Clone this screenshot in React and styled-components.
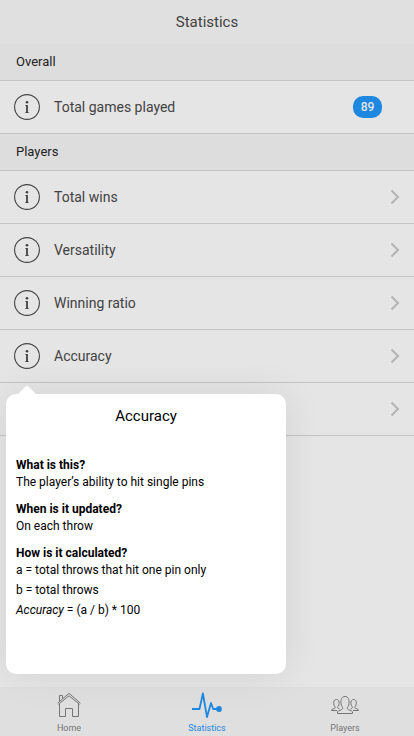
import React from "react";
import styled, { createGlobalStyle, css } from "styled-components";

const GlobalStyle = createGlobalStyle`
  *, *::before, *::after { box-sizing: border-box; }
  body {
    margin: 0;
    background: #e5e5e5;
    color: #424242;
    font-family: Roboto, "Liberation Sans", sans-serif;
  }
  h1, h2, h3, p, ul { margin: 0; padding: 0; }
`;

const Page = styled.div`
  display: flex;
  flex-direction: column;
  min-height: 100vh;
`;

const Header = styled.header`
  display: flex;
  align-items: center;
  justify-content: center;
  height: 44px;
  background: #e0e0e0;
`;

const Title = styled.h1`
  font-size: 15px;
  font-weight: 400;
  line-height: 20px;
`;

const Main = styled.main`
  flex: 1;
`;

const SectionTitle = styled.h2`
  padding: 8px 16px;
  border-bottom: 1px solid #c4c4c4;
  background: #dddddd;
  color: #222;
  font-size: 13px;
  font-weight: 400;
  line-height: 20px;
`;

const List = styled.ul`
  list-style: none;
`;

const Row = styled.li`
  position: relative;
  display: flex;
  align-items: center;
  height: 53px;
  padding-left: 14px;
  border-bottom: 1px solid #c4c4c4;
`;

const plainButton = css`
  border: 0;
  padding: 0;
  background: none;
  color: inherit;
  font: inherit;
  cursor: pointer;
`;

const InfoButton = styled.button`
  ${plainButton}
  display: flex;
  width: 26px;
  height: 26px;
`;

const RowLink = styled.a`
  display: flex;
  flex: 1;
  align-items: center;
  justify-content: space-between;
  padding: 0 14px;
  color: inherit;
  font-size: 14px;
  line-height: 20px;
  text-decoration: none;
`;

const RowText = styled.div`
  display: flex;
  flex: 1;
  align-items: center;
  justify-content: space-between;
  padding: 0 32px 0 14px;
  font-size: 14px;
  line-height: 20px;
`;

const Badge = styled.span`
  min-width: 29px;
  padding: 1px 7px;
  border-radius: 10px;
  background: #1e88e0;
  color: #e5e5e5;
  font-size: 12px;
  font-weight: 500;
  text-align: center;
`;

const Popover = styled.section`
  position: absolute;
  z-index: 1;
  top: 64px;
  left: 6px;
  width: 280px;
  min-height: 280px;
  border-radius: 10px;
  background: #fff;
  color: #000;
  box-shadow: 0 0 40px rgba(0, 0, 0, 0.08);
`;

const Arrow = styled.svg`
  position: absolute;
  top: -9px;
  left: 11px;
  width: 20px;
  height: 10px;
`;

const PopoverTitle = styled.h2`
  font-size: 15px;
  font-weight: 400;
  line-height: 44px;
  text-align: center;
`;

const PopoverBody = styled.div`
  display: flex;
  flex-direction: column;
  gap: 10px;
  padding: 20px 10px;
  font-size: 12px;
  line-height: 20px;
`;

const Question = styled.h3`
  font-size: 12px;
  font-weight: 700;
  line-height: 14px;
`;

const TabBar = styled.nav`
  display: flex;
  height: 49px;
  background: #dfdfdf;
`;

const Tab = styled.a`
  display: flex;
  flex: 1;
  flex-direction: column;
  align-items: center;
  padding-top: 4px;
  color: ${({ $active }) => ($active ? "#1e88e0" : "#757575")};
  font-size: 9px;
  line-height: 14px;
  text-decoration: none;

  svg {
    margin-bottom: 1px;
  }
`;

const InfoIcon = () => (
  <svg width="26" height="26" viewBox="0 0 26 26" aria-hidden="true">
    <circle cx="13" cy="13" r="12.4" fill="none" stroke="currentColor" strokeWidth="1.1" />
    <circle cx="13" cy="8.2" r="1.3" fill="currentColor" />
    <path d="M11.2 11h2.7v7.2l1.1.3v.6h-4v-.6l1.1-.3v-6.3l-.9-.3z" fill="currentColor" />
  </svg>
);

const Chevron = () => (
  <svg width="10" height="16" viewBox="0 0 10 16" aria-hidden="true">
    <path d="M1.500 1.500L8 8l-6.500 6.500" fill="none" stroke="#b3b3b3" strokeWidth="2" />
  </svg>
);

const HomeIcon = () => (
  <svg width="28" height="29" viewBox="0 0 28 29" fill="none" stroke="currentColor" aria-hidden="true">
    <path d="M2.600 12.200L14 2.300l11.400 9.900M3.400 13.300L14 4.800l10.600 8.500" strokeWidth="1" />
    <path d="M4.500 12.500v13h6v-8h7v8h6v-13M4.500 10V4.500h3v3.200" strokeWidth="1" />
  </svg>
);

const PulseIcon = () => (
  <svg width="32" height="29" viewBox="0 0 32 29" fill="none" stroke="currentColor" aria-hidden="true">
    <path d="M1 18h7.500l3.400-15.500L16 26l4-14 2.200 6H27" strokeWidth="1.800" strokeLinejoin="round" />
    <circle cx="28" cy="18" r="2.900" fill="currentColor" stroke="none" />
  </svg>
);

const PlayersIcon = () => (
  <svg width="30" height="29" viewBox="0 0 30 29" fill="none" stroke="currentColor" strokeWidth="1" aria-hidden="true">
    <path d="M7.500 22.500v-1.700c.3-1.400 4.500-1.300 5.200-3.200.3-1.200-1.500-2.200-1.700-5C10.600 8.300 11.900 5.500 15 5.500s4.400 2.800 4 7.100c-.2 2.800-2 3.800-1.700 5 .7 1.900 4.900 1.800 5.200 3.200v1.700z" />
    <path d="M7 19.500H1.500c0-2.200 3.700-1.500 3.700-3.200 0-.8-1.300-1.200-1.500-3.600C3.500 10 4.500 8.500 6.400 8.500s2.900 1.500 2.700 4.200c-.2 2.400-1.500 2.800-1.500 3.600 0 1 .9 1.300 1.900 1.700" />
    <path d="M23 19.500h5.500c0-2.200-3.700-1.500-3.700-3.200 0-.8 1.300-1.200 1.500-3.600.2-2.700-.8-4.200-2.700-4.200s-2.900 1.500-2.700 4.200c.2 2.400 1.500 2.800 1.500 3.600 0 1-.9 1.300-1.900 1.700" />
  </svg>
);

const AccuracyPopover = () => (
  <Popover role="dialog" aria-labelledby="accuracy-title">
    <Arrow viewBox="0 0 20 10" aria-hidden="true">
      <path d="M0 10L8.300 1.700Q10 0 11.700 1.700L20 10z" fill="#fff" />
    </Arrow>
    <PopoverTitle id="accuracy-title">Accuracy</PopoverTitle>
    <PopoverBody>
      <div>
        <Question>What is this?</Question>
        <p>The player’s ability to hit single pins</p>
      </div>
      <div>
        <Question>When is it updated?</Question>
        <p>On each throw</p>
      </div>
      <div>
        <Question>How is it calculated?</Question>
        <p>a = total throws that hit one pin only</p>
        <p>b = total throws</p>
        <p><em>Accuracy</em> = (a / b) * 100</p>
      </div>
    </PopoverBody>
  </Popover>
);

const playerStats = [
  { id: "wins", label: "Total wins" },
  { id: "versatility", label: "Versatility" },
  { id: "ratio", label: "Winning ratio" },
  { id: "accuracy", label: "Accuracy", popover: <AccuracyPopover /> },
  { id: "more", label: "" },
];

const tabs = [
  { label: "Home", icon: <HomeIcon /> },
  { label: "Statistics", icon: <PulseIcon />, active: true },
  { label: "Players", icon: <PlayersIcon /> },
];

export default function App() {
  return (
    <Page>
      <GlobalStyle />
      <Header>
        <Title>Statistics</Title>
      </Header>
      <Main>
        <SectionTitle>Overall</SectionTitle>
        <List>
          <Row>
            <InfoButton type="button" aria-label="About total games played">
              <InfoIcon />
            </InfoButton>
            <RowText>
              Total games played
              <Badge>89</Badge>
            </RowText>
          </Row>
        </List>
        <SectionTitle>Players</SectionTitle>
        <List>
          {playerStats.map(({ id, label, popover }) => (
            <Row key={id}>
              <InfoButton type="button" aria-label={`About ${label || "this statistic"}`}>
                <InfoIcon />
              </InfoButton>
              <RowLink href={`#${id}`} aria-label={label || "More"}>
                <span>{label}</span>
                <Chevron />
              </RowLink>
              {popover}
            </Row>
          ))}
        </List>
      </Main>
      <TabBar>
        {tabs.map(({ label, icon, active }) => (
          <Tab key={label} href={`#${label.toLowerCase()}`} $active={active} aria-current={active ? "page" : undefined}>
            {icon}
            {label}
          </Tab>
        ))}
      </TabBar>
    </Page>
  );
}
